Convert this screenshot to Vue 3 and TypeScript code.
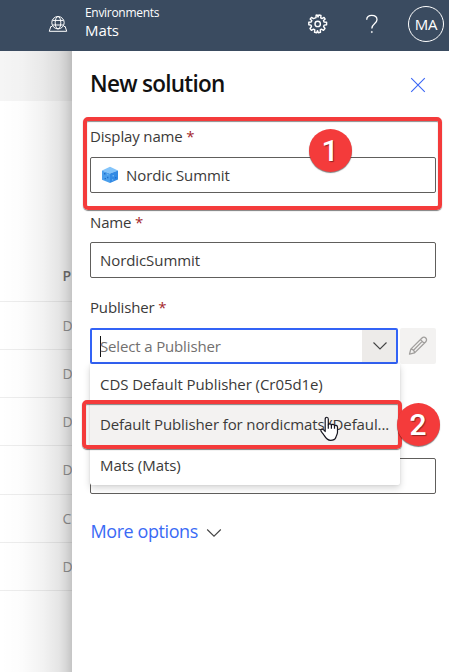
<script setup lang="ts">
interface Option {
  label: string
  tone: string
  active: boolean
}

const rows: string[] = ['D', 'D', 'D', 'D', 'C', 'D']
const options: Option[] = [
  { label: 'CDS Default Publisher (Cr05d1e)', tone: 'cds', active: false },
  { label: 'Default Publisher for nordicmats (Defaul...', tone: 'nordic', active: true },
  { label: 'Mats (Mats)', tone: 'mats', active: false },
]
</script>

<template>
  <div class="screen">
    <header class="topbar">
      <svg class="globe" viewBox="0 0 20 18" fill="none" stroke="#fff">
        <circle cx="10" cy="7.7" r="6.2" />
        <ellipse cx="10" cy="7.7" rx="2.8" ry="6.2" />
        <path d="M4.5 5.4h11M4.5 10h11M4 11.5H2.8L1.3 16.3h17.4l-1.5-4.8H16" />
      </svg>
      <div class="env">
        <span class="env-label">Environments</span>
        <span class="env-name">Mats</span>
      </div>
      <svg class="gear" viewBox="0 0 20 20" fill="none" stroke="#fff" stroke-width="1.4" stroke-linejoin="round">
        <path d="M8 3.7 8.1 1.3 9.2 1 10 3.1 10.8 1 13 1.5 12.7 3.9 14 4.6 16 3.4 17.2 5.1 15.5 6.6 16 8 18.6 8.2V10.7L16.2 11.1 15.6 12.5 17 14.5 15.5 16.3 13.4 15.1 12.3 15.9 12.5 18.3 10.3 18.7 9.5 16.6 8.7 18.7 6.5 18.3 6.8 15.9 5.5 15.1 3.4 16.3 2 14.5 3.5 12.5 3 11.1.8 10.7V8.2L3.2 8 3.8 6.6 2.1 5.1 3.5 3.4 5.5 4.6Z" />
        <circle cx="9.7" cy="9.9" r="2.7" />
      </svg>
      <svg class="help" viewBox="0 0 14 20" fill="none" stroke="#fff" stroke-width="1.3">
        <path d="M1.7 5.8C1.7 3 3.7 1.4 6.7 1.4S12 3.1 12 5.7C12 9.5 6.8 9.5 6.8 14.6" />
        <circle cx="6.8" cy="18" r=".65" fill="#fff" stroke-width=".5" />
      </svg>
      <div class="avatar">MA</div>
    </header>

    <div class="body">
      <main class="backdrop">
        <div class="commandbar"></div>
        <div class="cell head">P</div>
        <div v-for="(row, i) in rows" :key="i" class="cell" :class="{ tall: i === 3 }">{{ row }}</div>
      </main>

      <section class="panel">
        <div class="title-row">
          <h1>New solution</h1>
          <svg class="close" viewBox="0 0 16 16" fill="none" stroke="#3a66f5" stroke-width="1.1"><path d="M1.2 1.2 14.8 14.8M14.8 1.2 1.2 14.8" /></svg>
        </div>

        <div class="field display-field">
          <label>Display name <i>*</i></label>
          <div class="input">
            <svg class="cube" viewBox="0 0 18 18">
              <path fill="#83c4fa" d="M9 .8 17 4.4 9 7.6 1 4.4Z" />
              <path fill="#4a9fec" d="m1 4.4 8 3.2V17L1 13.8Z" />
              <path fill="#328ae4" d="m17 4.4-8 3.2V17l8-3.5Z" />
              <path fill="#1f6fcd" d="M3 7h1.5v1.5H3zM6 10.8h1.4v1.5H6zM3.6 12H5v1.3H3.6zM14 11h1.3v1.5H14z" />
              <path fill="#6cb4f4" d="M6 7.9h1.3v1.3H6zM11.5 9h1.5v1.5h-1.5zM11 13.3h1.3v1.3H11z" />
            </svg>
            <span>Nordic Summit</span>
          </div>
          <div class="callout box-one"></div>
          <div class="badge badge-one">1</div>
        </div>

        <div class="field">
          <label>Name <i>*</i></label>
          <div class="input"><span>NordicSummit</span></div>
        </div>

        <div class="field publisher-field">
          <label>Publisher <i>*</i></label>
          <div class="picker">
            <div class="combo">
              <span class="caret"></span>
              <span class="placeholder">Select a Publisher</span>
              <span class="arrow">
                <svg viewBox="0 0 16 10" fill="none" stroke="#444" stroke-width="1.1"><path d="M1.5 1.5 8 8l6.5-6.5" /></svg>
              </span>
            </div>
            <div class="edit">
              <svg viewBox="0 0 20 20" fill="none" stroke="#a19f9d" stroke-width="1.3" stroke-linejoin="round">
                <path d="m1.5 18.2 1.3-5.1L14 2a2.5 2.5 0 0 1 3.8 3.7L6.6 16.9ZM2.8 13.1c2 .1 3.5 1.6 3.8 3.8M12.4 3.6l3.8 3.7M14.2 5.4 5 14.7" />
              </svg>
            </div>
          </div>
          <div class="menu">
            <div v-for="o in options" :key="o.label" class="option" :class="[o.tone, { active: o.active }]">{{ o.label }}</div>
            <div class="callout box-two"></div>
            <div class="badge badge-two">2</div>
            <svg class="pointer" viewBox="0 0 20 26" fill="#fff" stroke="#15151f" stroke-width="1.2" stroke-linejoin="round">
              <path d="M5.2 15.5V3.2C5.2.6 8.3.6 8.3 3.2V9c.3-1.7 3-1.5 3.1.3.5-1.5 3-1.2 3.1.7.6-1.2 3-.8 3 1.2v5.1c0 2.2-1.5 3.5-1.8 5.5-.7 2-2.5 2.5-5.2 2.5-3.8 0-5-2.8-6.5-5.2C2.7 16.9.7 15.8.8 14.3c.3-1.9 2.7-1.4 4.4 1.2Z" />
              <path d="M8.3 8.5v4.2M11.4 9v3.7M14.5 10v2.7" />
            </svg>
          </div>
        </div>

        <div class="input version"></div>

        <div class="more">
          <span>More options</span>
          <svg viewBox="0 0 16 10" fill="none" stroke="#444" stroke-width="1.1"><path d="M1.2 1.5 8 8.2l6.8-6.7" /></svg>
        </div>
      </section>
    </div>
  </div>
</template>

<style>
body { overflow: hidden; background: #fff; }
</style>

<style scoped>
* { box-sizing: border-box; }
.screen { width: 449px; height: 672px; display: flex; flex-direction: column; overflow: hidden; font-family: "Open Sans", "Noto Sans", sans-serif; color: #3b3a39; white-space: nowrap; }
svg { display: block; flex: none; }
.topbar { height: 51px; flex: none; background: #3a4b60; color: #fff; display: flex; align-items: center; padding-left: 48px; }
.globe { width: 20px; height: 18px; margin-bottom: 3px; }
.env { display: flex; flex-direction: column; width: 222px; margin-left: 17px; padding-bottom: 8px; }
.env-label { font-size: 12px; line-height: 17px; letter-spacing: -.3px; }
.env-name { font-size: 15px; line-height: 18px; letter-spacing: -.1px; }
.gear { width: 20px; height: 20px; margin: 0 0 3px 1px; }
.help { width: 14px; height: 20px; margin: 0 0 3px 37px; }
.avatar { width: 36px; height: 36px; margin: 0 0 3px 29px; border: 1px solid #fff; border-radius: 50%; display: flex; align-items: center; justify-content: center; font-size: 15px; letter-spacing: -.3px; flex: none; }
.body { flex: 1; display: flex; min-height: 0; }
.backdrop { position: relative; width: 72px; flex: none; overflow: hidden; }
.backdrop::after { content: ""; position: absolute; inset: 0; background: linear-gradient(90deg, rgba(0,0,0,0), rgba(0,0,0,.012) 30%, rgba(0,0,0,.05) 60%, rgba(0,0,0,.1) 82%, rgba(0,0,0,.16) 92%, rgba(0,0,0,.23)); }
.commandbar { height: 50px; background: #f5f5f5; }
.cell { height: 48px; padding-left: 62.5px; border-bottom: 1px solid #ededed; font-size: 14px; line-height: 48px; color: #999; }
.cell.tall { height: 49px; }
.cell.head { height: 201px; padding-top: 151px; font-weight: 600; color: #747474; }
.panel { width: 377px; flex: none; padding: 0 13px 0 18px; background: #fff; }
.title-row { height: 74px; display: flex; justify-content: space-between; padding-top: 15px; }
h1 { margin: 0; font-size: 22.5px; line-height: 35px; font-weight: 600; letter-spacing: -.72px; color: #111; }
.close { width: 16px; height: 16px; margin: 11px 10px 0 0; }
.field { position: relative; height: 85px; }
.field label { display: block; height: 32px; line-height: 22px; font-size: 15px; letter-spacing: -.15px; }
.field label i { font-style: normal; color: #a4262c; }
.input { height: 36px; border: 1px solid #605e5c; border-radius: 2px; display: flex; align-items: center; padding: 0 9px; font-size: 15px; letter-spacing: -.08px; }
.cube { width: 18px; height: 18px; margin: 0 7px 0 1px; }
.display-field { height: 85px; }
.display-field + .field { height: 86px; }
.display-field + .field label { padding-top: 1px; height: 32px; }
.publisher-field { height: 162px; }
.picker { display: flex; gap: 2px; }
.combo { width: 308px; height: 36px; border: 2px solid #3363f6; border-radius: 2px; display: flex; align-items: center; padding-left: 8px; font-size: 15px; letter-spacing: -.15px; color: #72706f; }
.caret { width: 1px; height: 21px; background: #111; margin-right: -1px; }
.arrow { width: 34px; height: 32px; margin-left: auto; background: #edebe9; display: flex; align-items: center; justify-content: center; }
.arrow svg { width: 16px; height: 10px; margin-left: 2px; }
.edit { width: 36px; height: 36px; border-radius: 2px; background: #f3f2f1; display: flex; align-items: center; justify-content: center; }
.edit svg { width: 20px; height: 20px; }
.menu { position: absolute; z-index: 2; left: 0; top: 68px; width: 310px; height: 121px; background: #fff; border-radius: 0 0 2px 2px; box-shadow: 0 3px 7px rgba(0,0,0,.17), 0 0 2px rgba(0,0,0,.1); }
.option { height: 40px; padding-left: 10px; line-height: 40px; font-size: 15px; letter-spacing: -.07px; }
.option.active { height: 41px; background: #f3f2f1; line-height: 41px; letter-spacing: -.11px; }
.callout { position: absolute; border: 4px solid #f43b3b; border-radius: 5px; box-shadow: 0 1px 1px rgba(0,0,0,.5), inset 0 1px 1px rgba(0,0,0,.45); }
.box-one { left: -7px; top: -8px; width: 359px; height: 93px; }
.box-two { left: -8px; top: 36px; width: 320px; height: 49px; }
.badge { position: absolute; width: 43px; height: 43px; border-radius: 50%; background: #f43b3b; color: #fff; box-shadow: 0 1px 1px rgba(0,0,0,.5); font: 500 30px/44px Roboto, sans-serif; text-align: center; text-shadow: 1px 1px 1px rgba(0,0,0,.4); }
.badge-one { left: 218.5px; top: 4px; }
.badge-two { left: 306.5px; top: 39px; }
.pointer { position: absolute; left: 230px; top: 52px; width: 20px; height: 26px; }
.more { height: 36px; margin-top: 19px; padding-left: .5px; display: flex; align-items: center; font-size: 18px; letter-spacing: -.42px; color: #3a6af5; }
.more svg { width: 16px; height: 10px; margin: 4px 0 0 8px; }
</style>
